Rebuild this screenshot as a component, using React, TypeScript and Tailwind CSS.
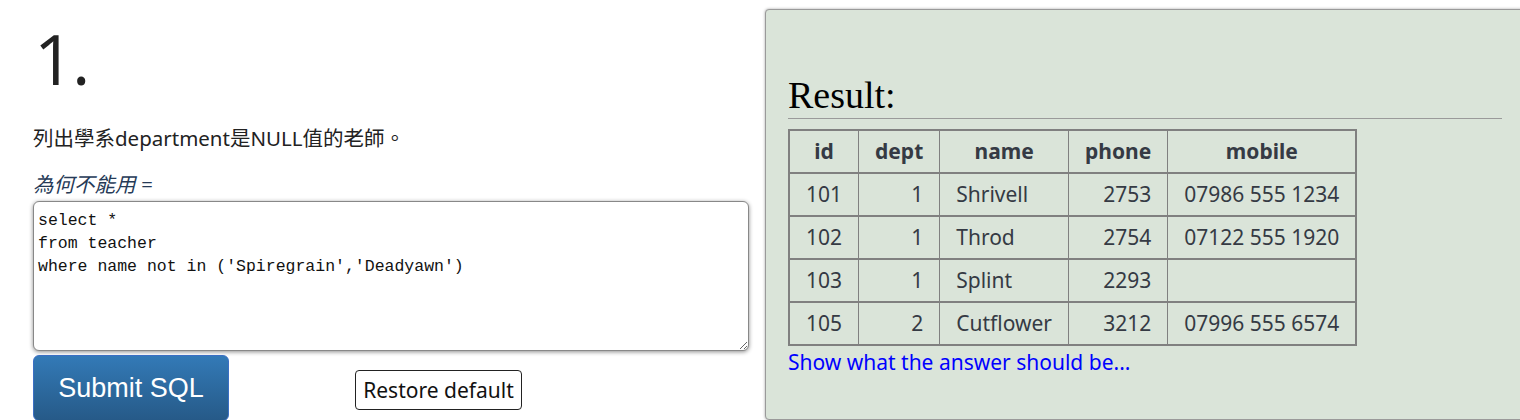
import React from "react";

const rows = [
  { id: 101, dept: 1, name: "Shrivell", phone: 2753, mobile: "07986 555 1234" },
  { id: 102, dept: 1, name: "Throd", phone: 2754, mobile: "07122 555 1920" },
  { id: 103, dept: 1, name: "Splint", phone: 2293, mobile: "" },
  { id: 105, dept: 2, name: "Cutflower", phone: 3212, mobile: "07996 555 6574" },
];

const sql = "select *\nfrom teacher\nwhere name not in ('Spiregrain','Deadyawn')";

const cell = "border-x border-y-2 border-[#808080] px-4 py-2 leading-[25px]";

export default function App() {
  return (
    <div className="w-[1520px] h-[420px] overflow-hidden bg-white flex">
      <div className="w-[765px] shrink-0 pl-[33px] pr-[16px]">
        <h1
          className="text-[70px] font-normal leading-[72px] mt-[22px] pl-[1px] tracking-[-2px] text-[#222]"
          style={{ fontFamily: '"Open Sans", sans-serif' }}
        >
          1.
        </h1>
        <p
          className="mt-[31px] text-[20.5px] leading-[26px] text-[#222]"
          style={{ fontFamily: '"Noto Sans", "Noto Sans CJK TC", sans-serif' }}
        >
          列出學系department是NULL值的老師。
        </p>
        <p
          className="mt-[20px] italic text-[20.5px] leading-[26px] text-[#263a57]"
          style={{ fontFamily: '"Noto Sans", "Noto Sans CJK TC", sans-serif' }}
        >
          為何不能用 =
        </p>
        <textarea
          readOnly
          defaultValue={sql}
          spellCheck={false}
          className="block w-[716px] h-[150px] mt-[4px] rounded-[6px] border border-[#888] shadow-[0_1px_4px_rgba(0,0,0,0.45)] px-[4px] pt-[7px] text-[16.5px] leading-[23px] text-[#111] outline-none bg-white"
          style={{ fontFamily: '"Liberation Mono", monospace' }}
        />
        <div className="flex items-start mt-[4px]">
          <button
            className="w-[196px] h-[66px] rounded-[6px] border border-[#3b6fc4] bg-gradient-to-b from-[#337ab7] to-[#265a88] text-white text-[27px]"
            style={{ fontFamily: '"Liberation Sans", Arial, sans-serif' }}
          >
            Submit SQL
          </button>
          <button
            className="ml-[126px] mt-[15px] w-[167px] h-[40px] rounded-[4px] border border-[#222] bg-white text-[#111] text-[21px] leading-[26px]"
            style={{ fontFamily: '"Noto Sans", sans-serif' }}
          >
            Restore default
          </button>
        </div>
      </div>
      <div className="w-[770px] shrink-0 mt-[9px] border border-[#9a9a9a] rounded-[4px] bg-[#dae4d9] pl-[22px] pr-[32px] shadow-[0_0_3px_rgba(0,0,0,0.35)]">
        <h2
          className="mt-[62px] text-[38px] leading-[46px] text-black"
          style={{ fontFamily: '"Liberation Serif", Georgia, serif' }}
        >
          Result:
        </h2>
        <div className="h-px bg-[#9a9a9a] mb-[10px]" />
        <div style={{ fontFamily: '"Noto Sans", sans-serif' }}>
          <table className="border-collapse border-2 border-[#808080] text-[21px] text-[#353a44]">
            <thead>
              <tr>
                <th className={`${cell} font-bold text-center`}>id</th>
                <th className={`${cell} font-bold text-center`}>dept</th>
                <th className={`${cell} font-bold text-center`}>name</th>
                <th className={`${cell} font-bold text-center`}>phone</th>
                <th className={`${cell} font-bold text-center`}>mobile</th>
              </tr>
            </thead>
            <tbody>
              {rows.map((r) => (
                <tr key={r.id}>
                  <td className={`${cell} text-right`}>{r.id}</td>
                  <td className={`${cell} text-right`}>{r.dept}</td>
                  <td className={`${cell} text-left`}>{r.name}</td>
                  <td className={`${cell} text-right`}>{r.phone}</td>
                  <td className={`${cell} text-left`}>{r.mobile}</td>
                </tr>
              ))}
            </tbody>
          </table>
          <a className="block text-[21px] leading-[32px] text-[#0000ff]" href="#">
            Show what the answer should be...
          </a>
        </div>
      </div>
    </div>
  );
}
